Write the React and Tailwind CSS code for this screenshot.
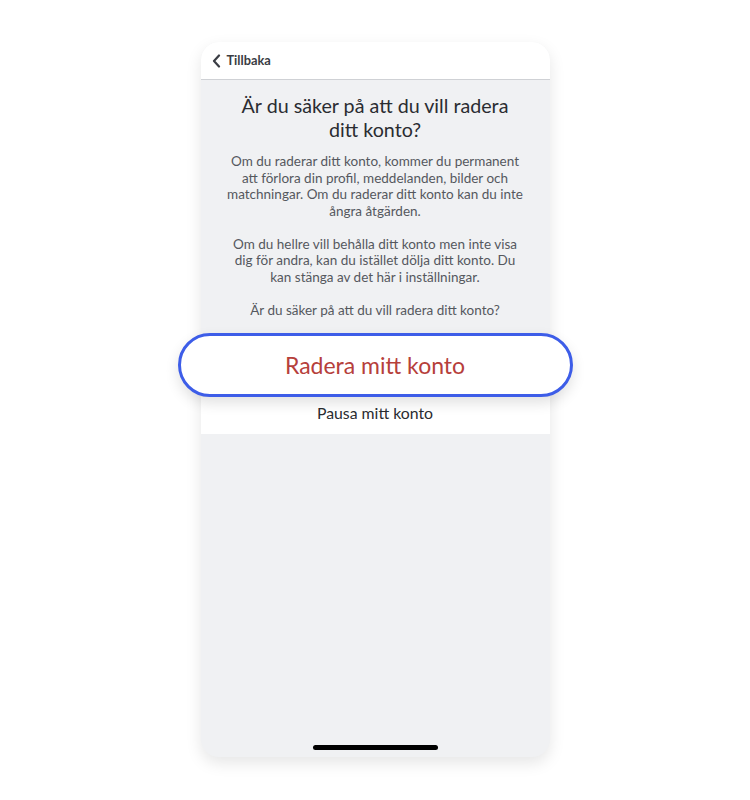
import React from "react";

export default function App() {
  return (
    <div className="w-[750px] h-[800px] bg-white flex justify-center pt-[42px]" style={{ fontFamily: "Lato, 'Open Sans', sans-serif" }}>
      <div className="w-[349px] h-[715px] bg-[#f0f1f3] rounded-[18px] shadow-[0_6px_16px_rgba(0,0,0,0.10)] flex flex-col">
        <div className="h-[38px] bg-white rounded-t-[18px] border-b border-[#cfd1d5] flex items-center pl-[10px] gap-[4px]">
          <svg width="12" height="14" viewBox="0 0 12 14" fill="none">
            <path d="M8 1.5 L3 7 L8 12.5" stroke="#3a3d44" strokeWidth="2.2" strokeLinecap="round" strokeLinejoin="round" />
          </svg>
          <span className="text-[12.8px] font-bold text-[#3a3d44]">Tillbaka</span>
        </div>
        <div className="flex flex-col items-center px-[24px] pt-[14px]">
          <h1 className="text-[19.7px] leading-[24px] text-[#2a2c31] text-center px-[10px]">
            Är du säker på att du vill radera ditt konto?
          </h1>
          <div className="mt-[11px] text-[13.5px] leading-[16.5px] text-[#55585e] text-center flex flex-col gap-[16.5px]">
            <p>Om du raderar ditt konto, kommer du permanent att förlora din profil, meddelanden, bilder och matchningar. Om du raderar ditt konto kan du inte ångra åtgärden.</p>
            <p>Om du hellre vill behålla ditt konto men inte visa dig för andra, kan du istället dölja ditt konto. Du kan stänga av det här i inställningar.</p>
            <p>Är du säker på att du vill radera ditt konto?</p>
          </div>
        </div>
        <div className="mt-[15px] mx-[-23px] h-[64px] rounded-full border-[3px] border-[#3d5de8] bg-white flex items-center justify-center shadow-[0_6px_14px_rgba(0,0,0,0.12)] relative z-10">
          <span className="text-[23px] text-[#b6403b]">Radera mitt konto</span>
        </div>
        <div className="h-[37px] bg-white flex items-center justify-center pb-[5px]">
          <span className="text-[15.8px] text-[#2a2c31]">Pausa mitt konto</span>
        </div>
        <div className="flex-1 flex items-end justify-center pb-[7px]">
          <div className="w-[125px] h-[5px] rounded-full bg-black" />
        </div>
      </div>
    </div>
  );
}
